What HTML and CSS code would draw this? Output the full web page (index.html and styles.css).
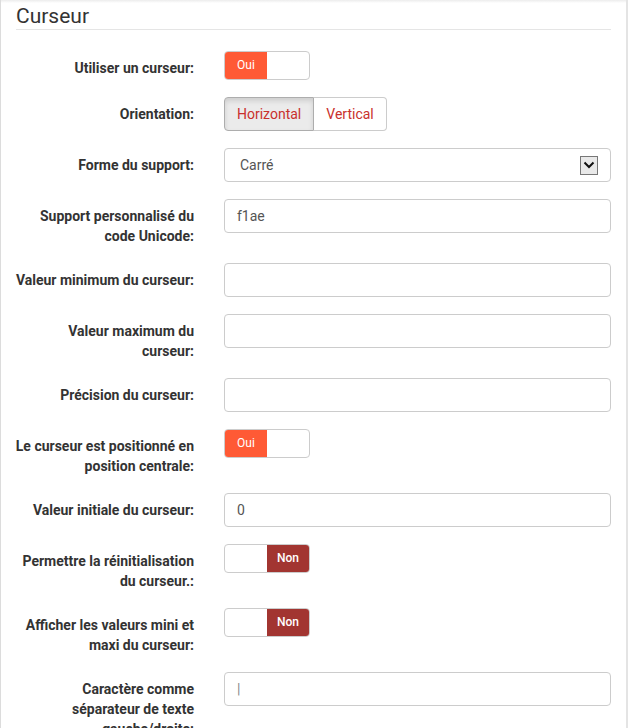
FILE: index.html
```html
<!DOCTYPE html>
<html lang="fr">
<head>
<meta charset="utf-8">
<title>Curseur</title>
<link rel="stylesheet" href="styles.css">
</head>
<body>
<div class="panel">
  <h3 class="title">Curseur</h3>
  <form class="form">
    <div class="row">
      <label class="lbl">Utiliser un curseur:</label>
      <div class="ctl"><span class="switch"><span class="on">Oui</span><span class="blank"></span></span></div>
    </div>
    <div class="row">
      <label class="lbl">Orientation:</label>
      <div class="ctl"><span class="btn-group"><span class="btn active">Horizontal</span><span class="btn">Vertical</span></span></div>
    </div>
    <div class="row">
      <label class="lbl">Forme du support:</label>
      <div class="ctl"><div class="select"><span>Carré</span><span class="arrow"><svg width="12" height="8" viewBox="0 0 12 8"><path d="M1.5 1.5 L6 6 L10.5 1.5" fill="none" stroke="#111" stroke-width="2"/></svg></span></div></div>
    </div>
    <div class="row">
      <label class="lbl">Support personnalisé du code Unicode:</label>
      <div class="ctl"><div class="input">f1ae</div></div>
    </div>
    <div class="row">
      <label class="lbl">Valeur minimum du curseur:</label>
      <div class="ctl"><div class="input"></div></div>
    </div>
    <div class="row">
      <label class="lbl">Valeur maximum du curseur:</label>
      <div class="ctl"><div class="input"></div></div>
    </div>
    <div class="row">
      <label class="lbl">Précision du curseur:</label>
      <div class="ctl"><div class="input"></div></div>
    </div>
    <div class="row">
      <label class="lbl">Le curseur est positionné en position centrale:</label>
      <div class="ctl"><span class="switch"><span class="on">Oui</span><span class="blank"></span></span></div>
    </div>
    <div class="row">
      <label class="lbl">Valeur initiale du curseur:</label>
      <div class="ctl"><div class="input">0</div></div>
    </div>
    <div class="row">
      <label class="lbl">Permettre la réinitialisation du curseur.:</label>
      <div class="ctl"><span class="switch"><span class="blank"></span><span class="off">Non</span></span></div>
    </div>
    <div class="row">
      <label class="lbl">Afficher les valeurs mini et maxi du curseur:</label>
      <div class="ctl"><span class="switch"><span class="blank"></span><span class="off">Non</span></span></div>
    </div>
    <div class="row">
      <label class="lbl">Caractère comme séparateur de texte gauche/droite:</label>
      <div class="ctl"><div class="input sep">|</div></div>
    </div>
  </form>
</div>
</body>
</html>
```
FILE: styles.css
```css
html, body {
  margin: 0;
  padding: 0;
  background: #fff;
  font-family: Roboto, "Liberation Sans", sans-serif;
  overflow: hidden;
}
.panel {
  width: 625px;
  min-height: 728px;
  border-left: 1px solid #dcdcdc;
  border-right: 2px solid #e4e4e4;
  background: linear-gradient(#ececec, #fff 3px);
}
.title {
  margin: 0 15px;
  padding-top: 3px;
  height: 26px;
  font-size: 21px;
  font-weight: 400;
  line-height: 26px;
  color: #333;
  border-bottom: 1px solid #e5e5e5;
}
.form {
  padding-top: 21px;
}
.row {
  display: grid;
  grid-template-columns: 208px 1fr;
  margin-bottom: 17px;
}
.lbl {
  padding: 7px 15px 0 13.5px;
  text-align: right;
  font-size: 14px;
  font-weight: 700;
  line-height: 20px;
  color: #333;
}
.ctl {
  padding: 0 15px;
}
.switch {
  display: inline-flex;
  width: 84px;
  height: 27px;
  border: 1px solid #ccc;
  border-radius: 4px;
  overflow: hidden;
  font-size: 12px;
  color: #fff;
  line-height: 27px;
}
.switch > span {
  width: 42px;
  text-align: center;
}
.on { background: #ff5a35; }
.off { background: #a23531; font-weight: 500; }
.btn-group {
  display: inline-flex;
  height: 34px;
}
.btn {
  box-sizing: border-box;
  height: 34px;
  padding: 0 12px;
  border: 1px solid #ccc;
  font-size: 14px;
  line-height: 32px;
  color: #c9302c;
  background: #fff;
}
.btn:first-child { border-radius: 4px 0 0 4px; }
.btn:last-child { border-radius: 0 4px 4px 0; border-left: 0; }
.btn.active {
  background: #ebebeb;
  border-color: #adadad;
  box-shadow: inset 0 3px 5px rgba(0,0,0,0.125);
}
.select, .input {
  box-sizing: border-box;
  height: 34px;
  border: 1px solid #ccc;
  border-radius: 4px;
  font-size: 14px;
  line-height: 32px;
  color: #555;
}
.input { padding: 0 12px; }
.sep { color: #888; }
.select {
  display: flex;
  justify-content: space-between;
  align-items: center;
  padding: 0 12px 0 15px;
}
.arrow {
  box-sizing: border-box;
  width: 18px;
  height: 19px;
  border: 1px solid #777;
  background: #e9e9e9;
  display: flex;
  align-items: center;
  justify-content: center;
}
.arrow svg { display: block; }
```
